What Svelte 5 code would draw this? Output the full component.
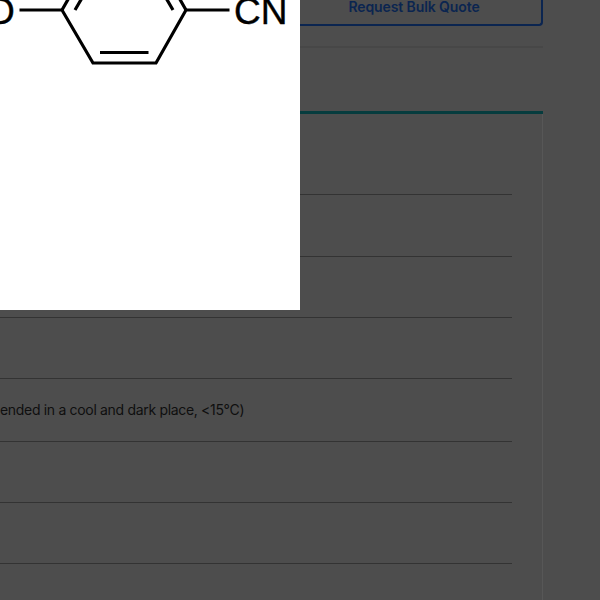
<script>
  const rows = [
    { h: 62 },
    { h: 61 },
    { h: 61 },
    { h: 63, text: 'ended in a cool and dark place, <15°C)' },
    { h: 61 },
    { h: 61 }
  ];
</script>

<div class="page">
  <div class="column">
    <div class="actions">
      <button class="quote">Request Bulk Quote</button>
    </div>
    <div class="tab-area"></div>
    <div class="panel">
      <div class="first"></div>
      {#each rows as row}
        <div class="row" style="height: {row.h}px">
          {#if row.text}<span>{row.text}</span>{/if}
        </div>
      {/each}
    </div>
  </div>

  <div class="viewer">
    <svg width="300" height="310" viewBox="0 0 300 310">
      <g fill="none" stroke="#000" stroke-width="3.200" stroke-linecap="butt" stroke-linejoin="miter">
        <path d="M19.500 10H62L93 63H156L186 10H229.500" />
        <path d="M62 10L70 -4M186 10L178 -4" />
        <path d="M75 10L82 -2M173 10L166 -2" />
        <path d="M100 52.500H148.500" />
      </g>
      <text x="-14" y="24" class="atom">O</text>
      <text x="234" y="24" class="atom">CN</text>
    </svg>
  </div>
</div>

<style>
  :global(body) {
    margin: 0;
    background: #4d4d4d;
  }
  .page {
    position: relative;
    width: 600px;
    height: 600px;
    overflow: hidden;
    background: #4d4d4d;
    font-family: "Inter", "Liberation Sans", sans-serif;
  }
  .column {
    width: 543px;
    display: flex;
    flex-direction: column;
  }
  .actions {
    height: 46px;
    border-bottom: 2px solid #474747;
  }
  .quote {
    display: block;
    width: 100%;
    height: 26px;
    margin: 0;
    padding: 0 0 13px 285px;
    border: 2px solid #0b2550;
    border-top: 0;
    border-radius: 0 0 4px 4px;
    background: transparent;
    color: #0b2550;
    font: 600 14px "Inter", "Liberation Sans", sans-serif;
    line-height: 14px;
    letter-spacing: -0.1px;
    text-align: center;
    box-sizing: border-box;
  }
  .tab-area {
    height: 63px;
    border-bottom: 3px solid #063c3e;
  }
  .panel {
    border-right: 1px solid #575757;
    height: 520px;
    padding-right: 30px;
  }
  .first {
    height: 81px;
    border-bottom: 1px solid #333;
    box-sizing: border-box;
  }
  .row {
    display: flex;
    align-items: center;
    padding-bottom: 2px;
    border-bottom: 1px solid #333;
    box-sizing: border-box;
    color: #0f0f0f;
    font-size: 14px;
    letter-spacing: -0.32px;
    white-space: nowrap;
  }
  .viewer {
    position: absolute;
    left: 0;
    top: 0;
    width: 300px;
    height: 310px;
    background: #fff;
  }
  .viewer svg {
    display: block;
  }
  .atom {
    font-family: "Liberation Sans", sans-serif;
    font-size: 37px;
    fill: #000;
    stroke: #000;
    stroke-width: 0.4px;
  }
</style>
